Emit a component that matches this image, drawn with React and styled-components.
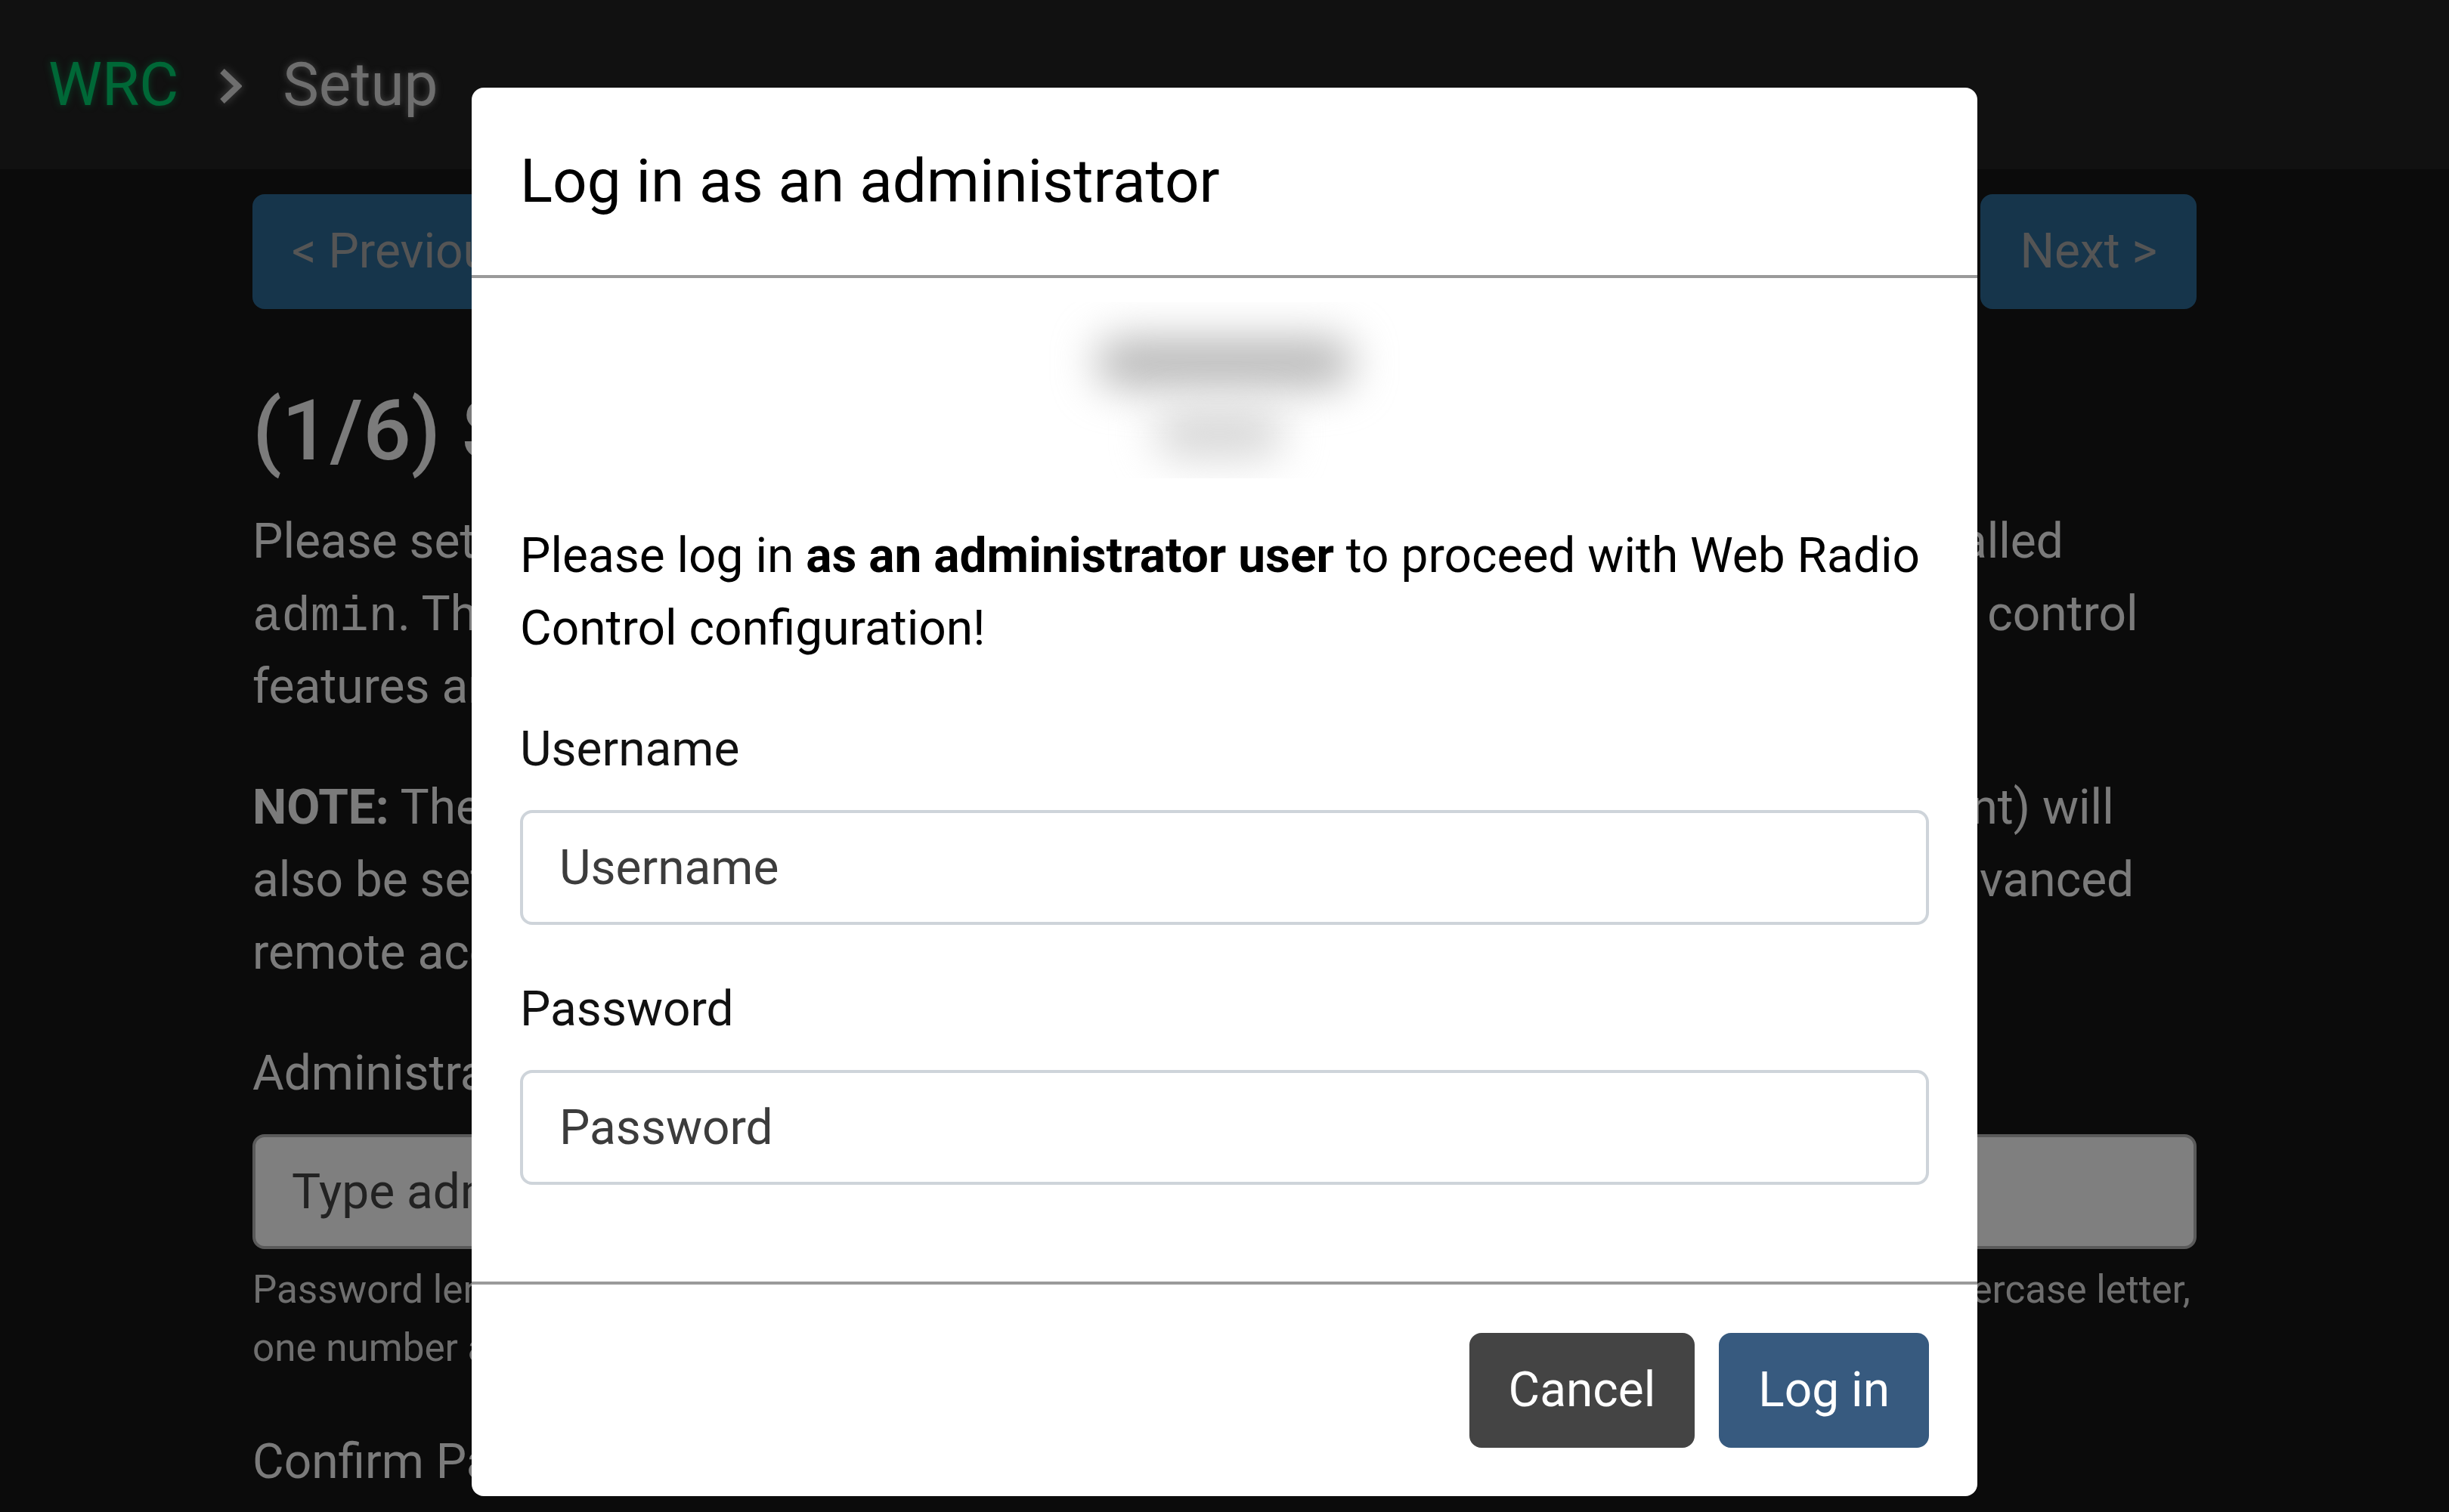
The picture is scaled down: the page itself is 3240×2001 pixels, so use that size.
import React from "react";
import styled, { createGlobalStyle } from "styled-components";

const GlobalStyle = createGlobalStyle`
  html, body { margin: 0; padding: 0; }
  body {
    background: #161616;
    font-family: Roboto, "Liberation Sans", sans-serif;
    color: #f6f6f6;
    overflow: hidden;
  }
  * { box-sizing: border-box; }
`;

const Navbar = styled.header`
  height: 224px;
  padding: 32px 64px;
  background: #222222;
  display: flex;
  align-items: center;
`;

const Brand = styled.div`
  display: flex;
  align-items: center;
  gap: 54px;
  font-size: 80px;
  line-height: 120px;
  padding: 20px 0;
`;

const BrandName = styled.span`
  color: ${(p) => p.$color};
  text-shadow: 0 0 10px ${(p) => p.$glow};
`;

const Chevron = styled.svg`
  width: 30px;
  height: 48px;
  margin-top: 4px;
  filter: drop-shadow(0 0 6px rgba(220, 220, 220, 0.6));
`;

const Container = styled.main`
  width: 2572px;
  margin: 0 auto;
  padding-top: 33px;
`;

const StepNav = styled.div`
  display: flex;
  justify-content: space-between;
`;

const NavButton = styled.button`
  font-family: inherit;
  font-size: 64px;
  line-height: 96px;
  padding: 24px 48px;
  border: 4px solid #2c6a96;
  border-radius: 16px;
  background: #2c6a96;
  color: #ababab;
`;

const Heading = styled.h3`
  margin: 94px 0 32px;
  font-size: 112px;
  font-weight: 500;
  line-height: 1.2;
  color: #f6f6f6;
`;

const Para = styled.p`
  margin: 0 0 64px;
  font-size: 64px;
  line-height: 96px;
  color: #f6f6f6;
`;

const Code = styled.code`
  font-family: "Liberation Mono", "DejaVu Sans Mono", monospace;
  font-size: 64px;
  line-height: 1;
  color: inherit;
`;

const FormGroup = styled.div`
  margin-bottom: 64px;
`;

const Label = styled.label`
  display: block;
  margin-bottom: 32px;
  font-size: 64px;
  line-height: 96px;
  color: ${(p) => (p.$dark ? "#111111" : "#f6f6f6")};
`;

const TextInput = styled.input`
  display: block;
  width: 100%;
  height: 152px;
  padding: 24px 48px;
  font-family: inherit;
  font-size: 64px;
  line-height: 96px;
  color: #444444;
  background: #ffffff;
  border: 4px solid ${(p) => (p.$light ? "#ced4da" : "#b4b4b4")};
  border-radius: 16px;
  outline: none;
  &::placeholder { color: ${(p) => (p.$light ? "#3c3c3c" : "#444444")}; opacity: 1; }
`;

const SmallText = styled.small`
  display: block;
  margin-top: 16px;
  font-size: 51.2px;
  line-height: 76.8px;
  color: #dcdcdc;
`;

const Backdrop = styled.div`
  position: fixed;
  inset: 0;
  background: rgba(0, 0, 0, 0.5);
`;

const ModalLayer = styled.div`
  position: fixed;
  inset: 0;
  display: flex;
  justify-content: center;
  align-items: flex-start;
  padding-top: 116px;
`;

const ModalContent = styled.div`
  width: 1992px;
  background: #ffffff;
  border-radius: 16px;
  color: #111111;
  overflow: hidden;
`;

const ModalHeader = styled.div`
  padding: 64px;
  border-bottom: 4px solid #9a9a9a;
`;

const ModalTitle = styled.h5`
  margin: 0;
  font-size: 80px;
  font-weight: 400;
  line-height: 120px;
  color: #000000;
`;

const ModalBody = styled.div`
  padding: 64px;
`;

const LogoArea = styled.div`
  height: 233px;
  margin: -32px 0 55px;
  display: flex;
  flex-direction: column;
  align-items: center;
  overflow: hidden;
`;

const Blob = styled.div`
  width: ${(p) => p.$w}px;
  height: ${(p) => p.$h}px;
  margin-top: ${(p) => p.$top}px;
  margin-left: ${(p) => p.$shift || 0}px;
  border-radius: ${(p) => p.$h / 2}px;
  background: ${(p) => p.$color};
  filter: blur(28px);
`;

const ModalText = styled.p`
  margin: 0 0 64px;
  font-size: 64px;
  line-height: 96px;
  color: #000000;
  strong { font-weight: 700; }
`;

const ModalFooter = styled.div`
  padding: 48px;
  border-top: 4px solid #9a9a9a;
  display: flex;
  justify-content: flex-end;
`;

const FooterButton = styled.button`
  margin: 16px;
  font-family: inherit;
  font-size: 64px;
  line-height: 96px;
  padding: 24px 48px;
  border: 4px solid ${(p) => p.$bg};
  border-radius: 16px;
  background: ${(p) => p.$bg};
  color: #ffffff;
`;

export default function App() {
  return (
    <>
      <GlobalStyle />
      <Navbar>
        <Brand>
          <BrandName $color="#00d06e" $glow="rgba(0, 208, 110, 0.55)">WRC</BrandName>
          <Chevron viewBox="0 0 30 48">
            <polyline points="4,4 25,24 4,44" fill="none" stroke="#dcdcdc" strokeWidth="8" />
          </Chevron>
          <BrandName $color="#dcdcdc" $glow="rgba(220, 220, 220, 0.55)">Setup</BrandName>
        </Brand>
      </Navbar>
      <Container>
        <StepNav>
          <NavButton>&lt; Previous</NavButton>
          <NavButton>Next &gt;</NavButton>
        </StepNav>
        <Heading>(1/6) Set administrator password</Heading>
        <Para>
          Please set a password for the administrator user of Web Radio Control, who is called{" "}
          <Code>admin</Code>. This user has full access to every setting, including the advanced remote control
          features and the system configuration.
        </Para>
        <Para>
          <strong>NOTE:</strong> The password of the Linux system user running the radio service (if present) will
          also be set to the same value, which is also used for SSH access and all other advanced remote access
          methods.
        </Para>
        <FormGroup>
          <Label>Administrator Password</Label>
          <TextInput type="password" placeholder="Type administrator password" />
          <SmallText>
            Password length must be at least eight characters and contain at least one uppercase letter, one
            lowercase letter, one number and one special character.
          </SmallText>
        </FormGroup>
        <FormGroup>
          <Label>Confirm Password</Label>
          <TextInput type="password" placeholder="Type administrator password again" />
        </FormGroup>
      </Container>
      <Backdrop />
      <ModalLayer>
        <ModalContent>
          <ModalHeader>
            <ModalTitle>Log in as an administrator</ModalTitle>
          </ModalHeader>
          <ModalBody>
            <LogoArea>
              <Blob $w={340} $h={64} $top={48} $color="#b6b6b6" />
              <Blob $w={170} $h={66} $top={28} $shift={-14} $color="#d6d6d6" />
            </LogoArea>
            <ModalText>
              Please log in <strong>as an administrator user</strong> to proceed with Web Radio Control
              configuration!
            </ModalText>
            <FormGroup>
              <Label $dark>Username</Label>
              <TextInput $light type="text" placeholder="Username" />
            </FormGroup>
            <FormGroup>
              <Label $dark>Password</Label>
              <TextInput $light type="password" placeholder="Password" />
            </FormGroup>
          </ModalBody>
          <ModalFooter>
            <FooterButton $bg="#444444">Cancel</FooterButton>
            <FooterButton $bg="#375a7f">Log in</FooterButton>
          </ModalFooter>
        </ModalContent>
      </ModalLayer>
    </>
  );
}
